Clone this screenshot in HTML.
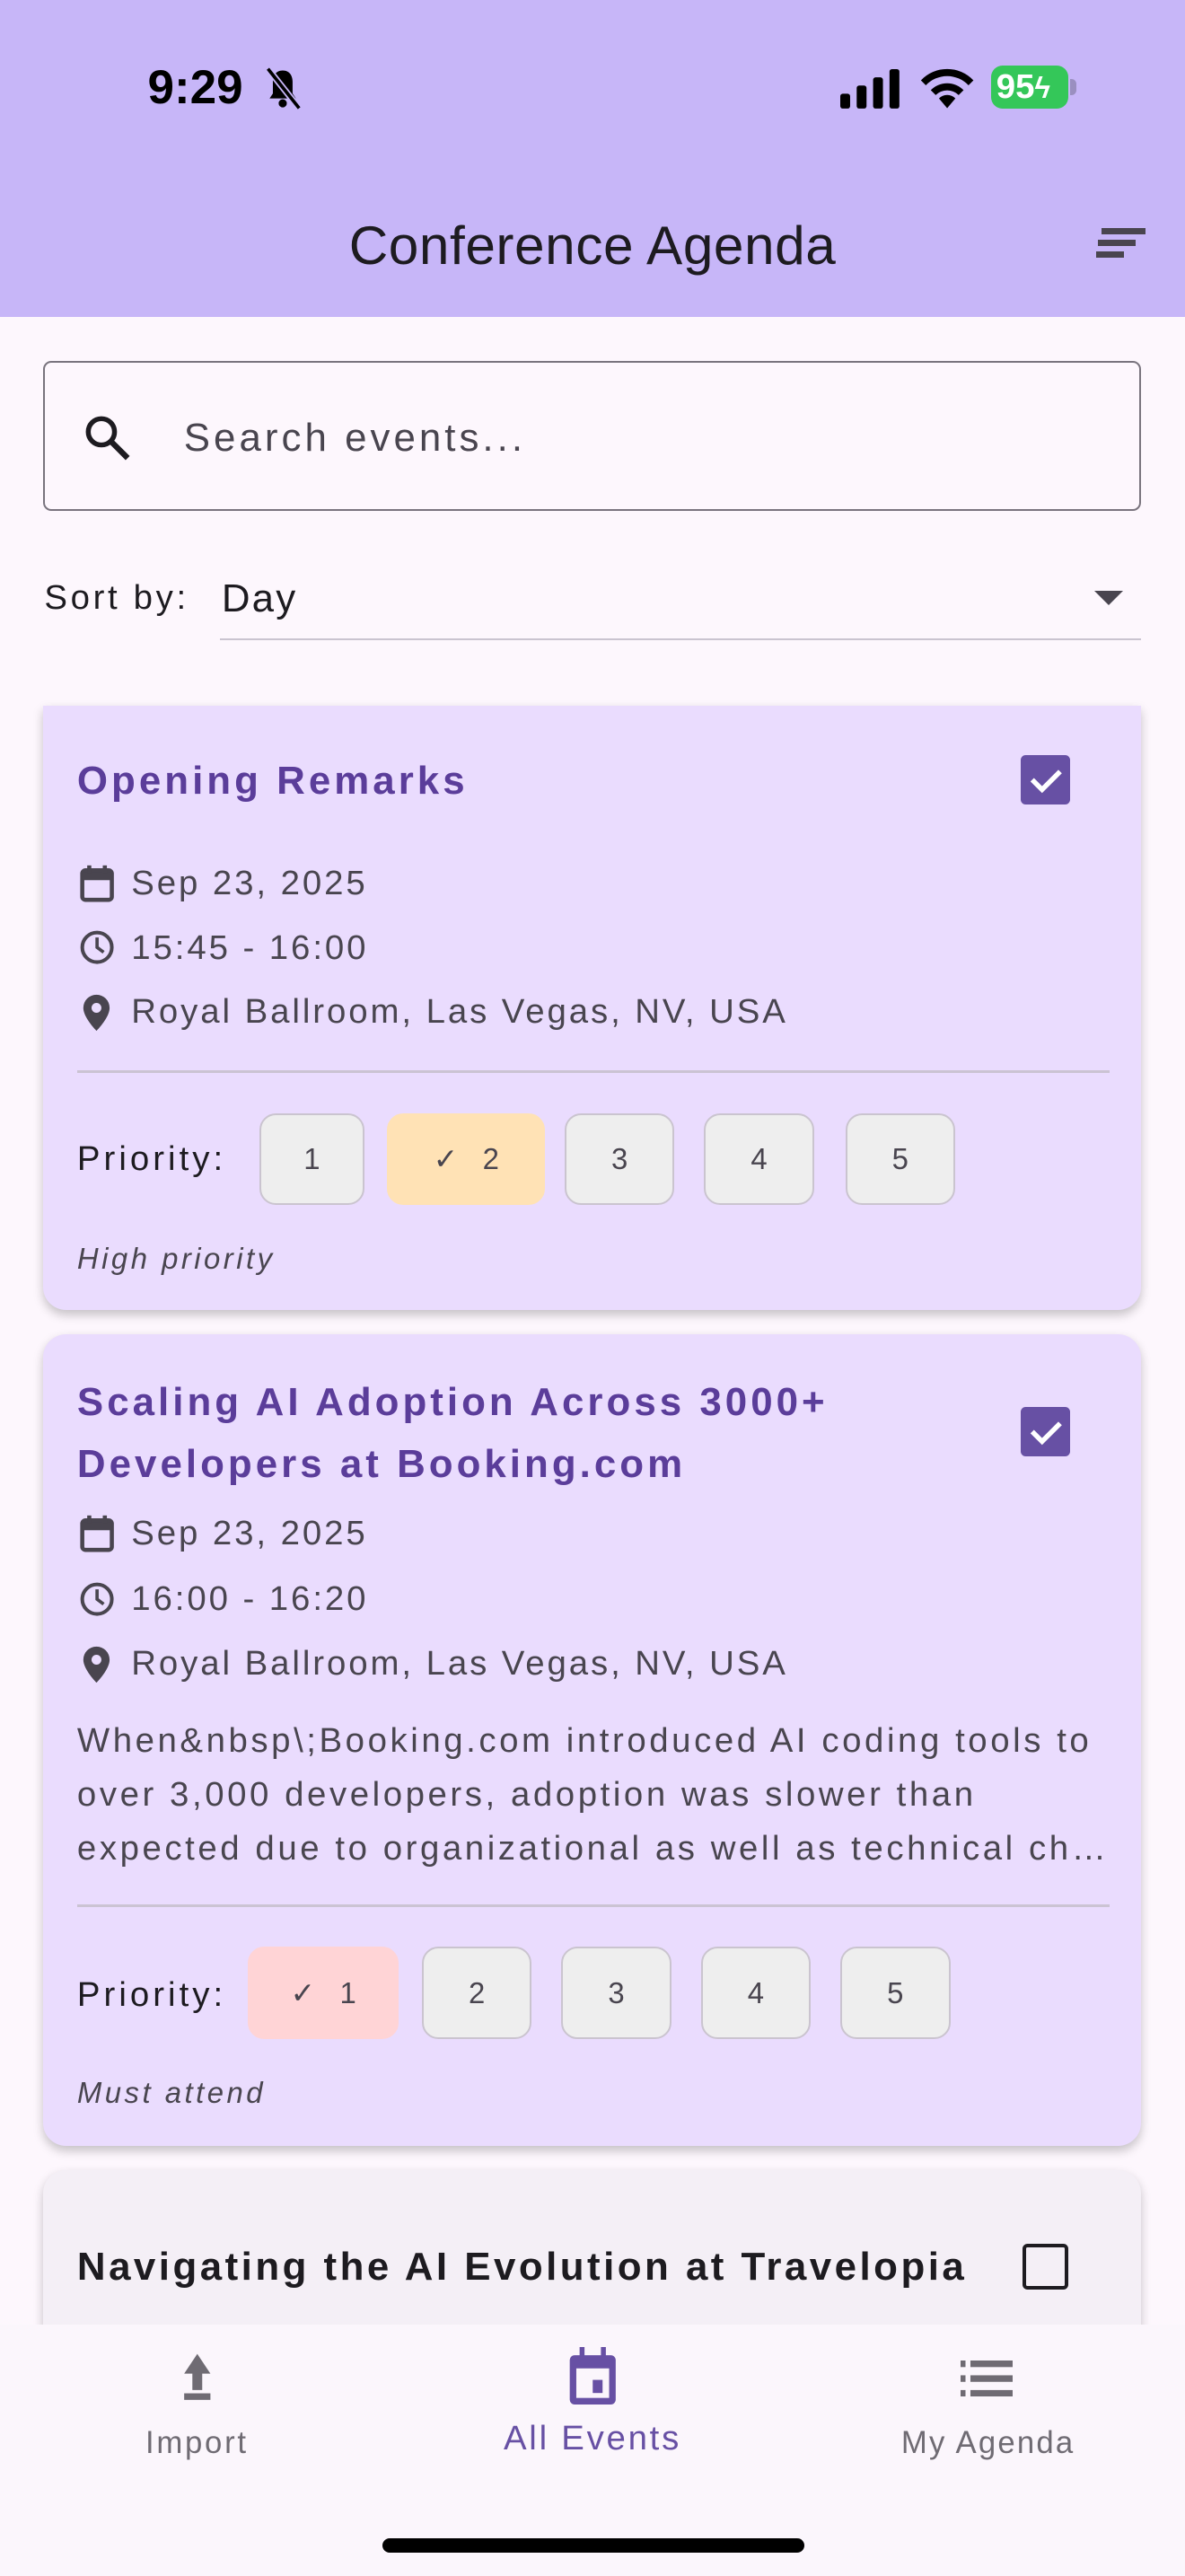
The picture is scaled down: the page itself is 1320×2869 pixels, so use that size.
<!DOCTYPE html>
<html><head><meta charset="utf-8"><style>
*{margin:0;padding:0;box-sizing:border-box}
html,body{width:1320px;height:2868px;overflow:hidden;background:#fdf7fd}
#r{position:absolute;left:0;top:0;width:722px;height:1569px;zoom:1.8283;font-family:"Liberation Sans",sans-serif;background:#fdf7fd;overflow:hidden}
.a{position:absolute}
.hdr{left:0;top:0;width:722px;height:193px;background:#c7b6f8}
.card{left:26px;width:669px;background:#eadcfe;border-radius:14px;box-shadow:0 3px 6px rgba(0,0,0,.22)}
.t{position:absolute;white-space:nowrap;line-height:1}
.meta{font-size:21px;color:#49454f;letter-spacing:1.6px}
.title{font-size:24px;font-weight:bold;color:#5b3d9a;letter-spacing:2.2px}
.chip{position:absolute;height:56px;border-radius:10px;background:#eeeeee;border:1.5px solid #cac4cf;font-size:18px;color:#49454f;display:flex;align-items:center;justify-content:center}
.cb{position:absolute;width:30px;height:30px;border-radius:3px;background:#6750a4}
.div{position:absolute;left:21px;width:629px;height:1.5px;background:#cbc3d3}
.pl{font-size:21px;color:#1d1b20;letter-spacing:2.2px}
.it{font-size:18px;font-style:italic;color:#49454f;letter-spacing:1.9px}
</style></head><body><div id="r">
<div class="a hdr"></div>
<div class="t" style="left:90px;top:39px;font-size:29px;font-weight:bold">9:29</div>
<svg class="a" style="left:160px;top:40px" width="24" height="28" viewBox="0 0 24 28"><path d="M12 3c-4 0-6 3-6 7v7l-2 3h16l-2-3v-7c0-4-2-7-6-7z" fill="#000"/><circle cx="12" cy="23" r="2.5"/><path d="M3 2l19 24" stroke="#c7b6f8" stroke-width="4"/><path d="M3 2l19 24" stroke="#000" stroke-width="2"/></svg>
<svg class="a" style="left:512px;top:42px" width="38" height="24"><rect x="0" y="15" width="6" height="9" rx="1.5"/><rect x="10" y="10" width="6" height="14" rx="1.5"/><rect x="20" y="5" width="6" height="19" rx="1.5"/><rect x="30" y="0" width="6" height="24" rx="1.5"/></svg>
<svg class="a" style="left:560px;top:40px" width="34" height="26" viewBox="0 0 34 26"><path d="M17 26l-5-6a7 7 0 0 1 10 0z"/><path d="M7 15a14 14 0 0 1 20 0l-3 3a10 10 0 0 0-14 0z"/><path d="M1 9a22 22 0 0 1 32 0l-3 3a18 18 0 0 0-26 0z"/></svg>
<div class="a" style="left:604px;top:40px;width:47px;height:26px;background:#34c759;border-radius:7px;color:#fff;font-weight:bold;font-size:21px;line-height:26px;padding-left:3px">95<span style="font-size:18px">ϟ</span></div>
<div class="a" style="left:652px;top:48px;width:4px;height:10px;background:#9a8fc0;border-radius:0 3px 3px 0"></div>
<div class="t" style="left:0;width:722px;text-align:center;top:133px;font-size:33px;color:#1d1b20;letter-spacing:0.3px">Conference Agenda</div>
<div class="a" style="left:671px;top:139px;width:27px;height:4px;background:#49454f"></div>
<div class="a" style="left:669px;top:146px;width:23px;height:4px;background:#49454f"></div>
<div class="a" style="left:668px;top:153px;width:17px;height:4px;background:#49454f"></div>

<div class="a" style="left:26px;top:220px;width:669px;height:91px;border:1.5px solid #79747e;border-radius:5px"></div>
<svg class="a" style="left:50px;top:251px" width="32" height="32" viewBox="0 0 32 32"><circle cx="12" cy="12" r="8" fill="none" stroke="#1d1b20" stroke-width="3"/><path d="M18 18l10 10" stroke="#1d1b20" stroke-width="3.5"/></svg>
<div class="t" style="left:112px;top:255px;font-size:24px;color:#49454f;letter-spacing:2.2px">Search events...</div>
<div class="t" style="left:27px;top:354px;font-size:21px;color:#1d1b20;letter-spacing:2px">Sort by:</div>
<div class="t" style="left:135px;top:353px;font-size:24px;color:#1d1b20;letter-spacing:1.2px">Day</div>
<div class="a" style="left:134px;top:389px;width:561px;height:1px;background:#cac4d0"></div>
<div class="a" style="left:667px;top:360px;width:0;height:0;border-left:9px solid transparent;border-right:9px solid transparent;border-top:9px solid #49454f"></div>

<!-- card1 -->
<div class="a card" style="top:430px;height:368px;border-radius:0 0 14px 14px">
<div class="t title" style="left:21px;top:34px">Opening Remarks</div>
<div class="cb" style="left:596px;top:30px"><svg width="30" height="30"><path d="M7 15l6 6 11-11" stroke="#fff" stroke-width="3" fill="none"/></svg></div>
<svg class="a" style="left:22px;top:96px" width="22" height="24" viewBox="0 0 22 24"><rect x="2" y="4" width="18" height="18" rx="2" fill="none" stroke="#49454f" stroke-width="2.5"/><rect x="2" y="5" width="18" height="5" fill="#49454f"/><rect x="5" y="1" width="2.5" height="5" fill="#49454f"/><rect x="14.5" y="1" width="2.5" height="5" fill="#49454f"/></svg>
<div class="t meta" style="left:54px;top:98px">Sep 23, 2025</div>
<svg class="a" style="left:22px;top:136px" width="22" height="22" viewBox="0 0 22 22"><circle cx="11" cy="11" r="9" fill="none" stroke="#49454f" stroke-width="2.2"/><path d="M11 5v6l4 3" stroke="#49454f" stroke-width="2" fill="none"/></svg>
<div class="t meta" style="left:54px;top:137px">15:45 - 16:00</div>
<svg class="a" style="left:24px;top:175px" width="18" height="24" viewBox="0 0 18 24"><path d="M9 1a8 8 0 0 0-8 8c0 6 8 14 8 14s8-8 8-14a8 8 0 0 0-8-8z" fill="#49454f"/><circle cx="9" cy="9" r="3" fill="#eadcfe"/></svg>
<div class="t meta" style="left:54px;top:176px">Royal Ballroom, Las Vegas, NV, USA</div>
<div class="div" style="top:222px"></div>
<div class="t pl" style="left:21px;top:266px">Priority:</div>
<div class="chip" style="left:132px;top:248px;width:64px">1</div>
<div class="chip" style="left:210px;top:248px;width:96px;background:#ffe2b5;border-color:#ffe2b5">✓&nbsp;&nbsp;&nbsp;2</div>
<div class="chip" style="left:318px;top:248px;width:67px">3</div>
<div class="chip" style="left:403px;top:248px;width:67px">4</div>
<div class="chip" style="left:489px;top:248px;width:67px">5</div>
<div class="t it" style="left:21px;top:328px">High priority</div>
</div>

<!-- card2 -->
<div class="a card" style="top:813px;height:494px">
<div class="t title" style="left:21px;top:22px;line-height:38px">Scaling AI Adoption Across 3000+<br>Developers at Booking.com</div>
<div class="cb" style="left:596px;top:44px"><svg width="30" height="30"><path d="M7 15l6 6 11-11" stroke="#fff" stroke-width="3" fill="none"/></svg></div>
<svg class="a" style="left:22px;top:109px" width="22" height="24" viewBox="0 0 22 24"><rect x="2" y="4" width="18" height="18" rx="2" fill="none" stroke="#49454f" stroke-width="2.5"/><rect x="2" y="5" width="18" height="5" fill="#49454f"/><rect x="5" y="1" width="2.5" height="5" fill="#49454f"/><rect x="14.5" y="1" width="2.5" height="5" fill="#49454f"/></svg>
<div class="t meta" style="left:54px;top:111px">Sep 23, 2025</div>
<svg class="a" style="left:22px;top:150px" width="22" height="22" viewBox="0 0 22 22"><circle cx="11" cy="11" r="9" fill="none" stroke="#49454f" stroke-width="2.2"/><path d="M11 5v6l4 3" stroke="#49454f" stroke-width="2" fill="none"/></svg>
<div class="t meta" style="left:54px;top:151px">16:00 - 16:20</div>
<svg class="a" style="left:24px;top:189px" width="18" height="24" viewBox="0 0 18 24"><path d="M9 1a8 8 0 0 0-8 8c0 6 8 14 8 14s8-8 8-14a8 8 0 0 0-8-8z" fill="#49454f"/><circle cx="9" cy="9" r="3" fill="#eadcfe"/></svg>
<div class="t meta" style="left:54px;top:190px">Royal Ballroom, Las Vegas, NV, USA</div>
<div class="t meta" style="left:21px;top:231px;line-height:33px;letter-spacing:1.95px">When&amp;nbsp\;Booking.com introduced AI coding tools to<br>over 3,000 developers, adoption was slower than<br>expected due to organizational as well as technical ch…</div>
<div class="div" style="top:347px"></div>
<div class="t pl" style="left:21px;top:392px">Priority:</div>
<div class="chip" style="left:125px;top:373px;width:92px;background:#ffd4d6;border-color:#ffd4d6">✓&nbsp;&nbsp;&nbsp;1</div>
<div class="chip" style="left:231px;top:373px;width:67px">2</div>
<div class="chip" style="left:316px;top:373px;width:67px">3</div>
<div class="chip" style="left:401px;top:373px;width:67px">4</div>
<div class="chip" style="left:486px;top:373px;width:67px">5</div>
<div class="t it" style="left:21px;top:453px">Must attend</div>
</div>

<!-- card3 -->
<div class="a card" style="top:1322px;height:200px;background:#f4eff6">
<div class="t" style="left:21px;top:47px;font-size:24px;font-weight:bold;color:#1d1b20;letter-spacing:1.9px">Navigating the AI Evolution at Travelopia</div>
<div class="a" style="left:597px;top:45px;width:28px;height:28px;border:2.5px solid #1d1b20;border-radius:3px"></div>
</div>

<!-- bottom nav -->
<div class="a" style="left:0;top:1416px;width:722px;height:153px;background:#fbf6fc"></div>
<svg class="a" style="left:107px;top:1432px" width="26" height="30" viewBox="0 0 26 30"><path d="M13 2l-8 12h5v10h6V14h5z" fill="#6f6b73"/><rect x="5" y="26" width="16" height="4" fill="#6f6b73"/></svg>
<div class="t" style="left:0;width:240px;text-align:center;top:1479px;font-size:19px;color:#6f6b73;letter-spacing:1.5px">Import</div>
<svg class="a" style="left:345px;top:1430px" width="32" height="36" viewBox="0 0 32 36"><rect x="2" y="5" width="28" height="30" rx="3" fill="#6750a4"/><rect x="6" y="13" width="20" height="18" fill="#fbf6fc"/><rect x="16" y="20" width="6" height="8" fill="#6750a4"/><rect x="8" y="0" width="3" height="6" fill="#6750a4"/><rect x="21" y="0" width="3" height="6" fill="#6750a4"/></svg>
<div class="t" style="left:241px;width:240px;text-align:center;top:1475px;font-size:21px;color:#6750a4;letter-spacing:1.5px">All Events</div>
<svg class="a" style="left:585px;top:1438px" width="32" height="22" viewBox="0 0 32 22"><rect x="0" y="0" width="3" height="4" fill="#6f6b73"/><rect x="6" y="0" width="26" height="4" fill="#6f6b73"/><rect x="0" y="9" width="3" height="4" fill="#6f6b73"/><rect x="6" y="9" width="26" height="4" fill="#6f6b73"/><rect x="0" y="18" width="3" height="4" fill="#6f6b73"/><rect x="6" y="18" width="26" height="4" fill="#6f6b73"/></svg>
<div class="t" style="left:482px;width:240px;text-align:center;top:1479px;font-size:19px;color:#6f6b73;letter-spacing:1.2px">My Agenda</div>
<div class="a" style="left:233px;top:1546px;width:257px;height:9px;background:#000;border-radius:5px"></div>
</div></body></html>
